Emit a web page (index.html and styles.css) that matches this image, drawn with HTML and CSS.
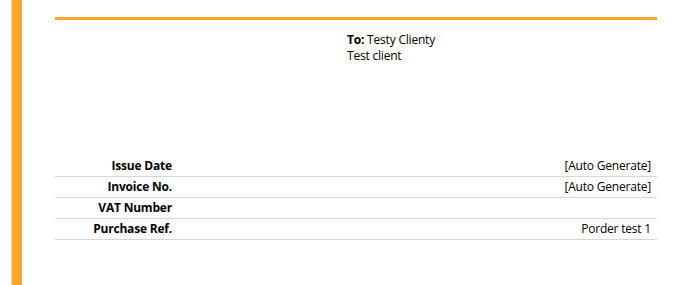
FILE: index.html
```html
<!DOCTYPE html>
<html lang="en">

<head>
    <meta charset="UTF-8">
    <meta name="viewport" content="width=device-width, initial-scale=1.0">
    <title>Invoice</title>
    <link rel="stylesheet" href="styles.css">
</head>

<body>

    <div class="page">
        <div class="edge"></div>

        <div class="invoice">
            <div class="invoice-head">
                <div class="spacer"></div>
                <div class="recipient">
                    <div><b>To:</b> Testy Clienty</div>
                    <div>Test client</div>
                </div>
            </div>

            <table class="details">
                <tr>
                    <th>Issue Date</th>
                    <td>[Auto Generate]</td>
                </tr>
                <tr>
                    <th>Invoice No.</th>
                    <td>[Auto Generate]</td>
                </tr>
                <tr>
                    <th>VAT Number</th>
                    <td></td>
                </tr>
                <tr>
                    <th>Purchase Ref.</th>
                    <td>Porder test 1</td>
                </tr>
            </table>
        </div>
    </div>

</body>

</html>
```

FILE: styles.css
```css
body {
    margin: 0;
    background-color: #fff;
    font-family: 'Open Sans', sans-serif;
    font-size: 12px;
    letter-spacing: -0.2px;
    color: #000;
}

.page {
    display: flex;
    height: 285px;
    padding-left: 11px;
}

.edge {
    width: 10px;
    border-left: 1px solid #d9d9d9;
    background-color: #fea52a;
}

.invoice {
    width: 602px;
    margin-left: 33px;
    padding-top: 17px;
}

.invoice-head {
    display: grid;
    grid-template-columns: 292px 1fr;
    height: 124px;
    padding-top: 12px;
    border-top: 3px solid #fea52a;
    line-height: 16px;
}

.details {
    width: 100%;
    border-collapse: collapse;
    line-height: 20px;
}

.details th,
.details td {
    padding: 0 6px;
    border-bottom: 1px solid #d6d6d6;
    text-align: right;
    height: 20px;
}

.details th {
    width: 111px;
    font-weight: 700;
}
```
